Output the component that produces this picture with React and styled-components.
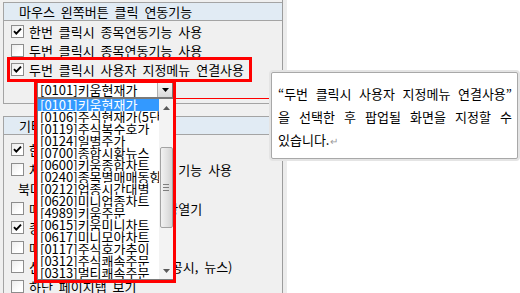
import React from "react";
import styled, { createGlobalStyle } from "styled-components";

const GlobalStyle = createGlobalStyle`
  html, body { margin: 0; padding: 0; background: #ffffff; }
  body {
    font-family: "Noto Sans CJK KR", "Noto Sans", sans-serif;
    font-size: 13px;
    color: #000;
  }
  * { box-sizing: border-box; }
`;

const Page = styled.div`
  position: relative;
  width: 520px;
  height: 293px;
  overflow: hidden;
  display: flex;
`;

const LeftPane = styled.div`
  width: 282px;
  height: 100%;
  background: #f0f0f0;
  padding: 2px 0 0 3px;
  display: flex;
  flex-direction: column;
  gap: 12px;
`;

const Divider = styled.div`
  width: 1px;
  background: #9c9c9c;
`;

const Gutter = styled.div`
  width: 4px;
  background: #ececec;
`;

const RightPane = styled.div`
  flex: 1;
  background: #ffffff;
`;

const Group = styled.div`
  position: relative;
  border: 1px solid #a4a4a4;
  border-right: none;
  ${(p) => (p.$open ? "border-bottom: none;" : "")}
  background: #f0f0f0;
  flex: ${(p) => (p.$grow ? 1 : "none")};
`;

const GroupHeader = styled.div`
  height: 18px;
  line-height: 18px;
  background: #e1ebf4;
  border-bottom: 1px solid #a4a4a4;
  padding-left: 15px;
  white-space: nowrap;
  word-spacing: 3px;
`;

const Rows = styled.div`
  display: flex;
  flex-direction: column;
  padding-top: ${(p) => p.$pt}px;
  padding-bottom: ${(p) => p.$pb || 0}px;
`;

const Row = styled.div`
  height: ${(p) => p.$h}px;
  display: flex;
  align-items: center;
  gap: 5px;
  padding-left: ${(p) => (p.$plain ? 14 : 7)}px;
  white-space: nowrap;
  word-spacing: 3px;
`;

const Box = styled.span`
  width: 13px;
  height: 13px;
  flex: none;
  border: 1px solid #8d8d8d;
  background: linear-gradient(135deg, #ececec 0%, #ffffff 70%);
  display: flex;
  align-items: center;
  justify-content: center;
`;

const Check = ({ on }) => (
  <Box>
    {on && (
      <svg width="11" height="11" viewBox="0 0 11 11">
        <path d="M2 5.2 L4.3 7.6 L9 2.6" fill="none" stroke="#000" strokeWidth="1.9" />
      </svg>
    )}
  </Box>
);

const CheckRow = ({ on, h, children }) => (
  <Row $h={h}>
    <Check on={on} />
    <span>{children}</span>
  </Row>
);

const ComboWrap = styled.div`
  position: relative;
  margin: 3px 0 0 33px;
  width: 136px;
  height: 16px;
  background: #fff;
  border: 1px solid #7a7a7a;
  display: flex;
  align-items: center;
  z-index: 3;
`;

const ComboText = styled.span`
  flex: 1;
  padding-left: 2px;
  line-height: 14px;
  white-space: nowrap;
  overflow: hidden;
`;

const ComboButton = styled.span`
  width: 15px;
  height: 14px;
  background: linear-gradient(#f6f6f6, #dadada);
  border-left: 1px solid #b0b0b0;
  display: flex;
  align-items: center;
  justify-content: center;
`;

const ListPanel = styled.div`
  position: absolute;
  left: -1px;
  top: 15px;
  width: 137px;
  height: 182px;
  background: #fff;
  border: 1px solid #7a7a7a;
  display: flex;
`;

const ListItems = styled.div`
  flex: 1;
  overflow: hidden;
`;

const ListItem = styled.div`
  height: 12px;
  line-height: 12px;
  padding-left: 2px;
  white-space: nowrap;
  overflow: hidden;
  background: ${(p) => (p.$sel ? "#3399ff" : "transparent")};
  color: ${(p) => (p.$sel ? "#fff" : "#000")};
`;

const ScrollBar = styled.div`
  width: 14px;
  background: #f3f3f3;
  display: flex;
  flex-direction: column;
  align-items: center;
`;

const ArrowSlot = styled.div`
  height: 17px;
  width: 100%;
  display: flex;
  align-items: center;
  justify-content: center;
`;

const Track = styled.div`
  flex: 1;
  width: 100%;
  padding-top: ${(p) => p.$offset}px;
  display: flex;
  flex-direction: column;
  align-items: center;
`;

const Thumb = styled.div`
  width: 13px;
  height: 81px;
  border: 1px solid #a3a3a3;
  border-radius: 2px;
  background: linear-gradient(90deg, #f2f2f2, #e0e0e0 60%, #d2d2d2);
  display: flex;
  flex-direction: column;
  align-items: center;
  justify-content: center;
  gap: 2px;
`;

const Grip = styled.span`
  width: 6px;
  height: 1px;
  background: #7e7e7e;
`;

const RedFrame = styled.div`
  position: absolute;
  left: ${(p) => p.$x}px;
  top: ${(p) => p.$y}px;
  width: ${(p) => p.$w}px;
  height: ${(p) => p.$h}px;
  border: 3px solid #ff0000;
  z-index: 5;
  pointer-events: none;
`;

const RedLine = styled.div`
  position: absolute;
  left: 176px;
  top: 98px;
  width: 95px;
  height: 1px;
  background: #ff0000;
  z-index: 5;
`;

const Callout = styled.div`
  position: absolute;
  left: 271px;
  top: 72px;
  width: 247px;
  height: 87px;
  background: #fff;
  border: 1px solid #a8a8a8;
  border-radius: 2px;
  box-shadow: 0 0 0 2px #e4e4e4;
  padding: 9px 5px 0 6px;
  z-index: 6;
`;

const CalloutLine = styled.div`
  height: 23px;
  line-height: 23px;
  white-space: nowrap;
  text-align: ${(p) => (p.$justify ? "justify" : "left")};
  text-align-last: ${(p) => (p.$justify ? "justify" : "left")};
`;

const ReturnMark = styled.span`
  color: #9a9a9a;
  font-size: 10px;
  margin-left: 1px;
`;

const items = [
  "[0101]키움현재가",
  "[0106]주식현재가(5단",
  "[0119]주식복수호가",
  "[0124]일별주가",
  "[0700]종합시황뉴스",
  "[0600]키움종합차트",
  "[0240]종목별매매동향",
  "[0212]업종시간대별",
  "[0620]미니업종차트",
  "[4989]키움주문",
  "[0615]키움미니차트",
  "[0617]미니모아차트",
  "[0117]주식호가추이",
  "[0312]주식쾌속주문",
  "[0313]멀티쾌속주문",
];

const Up = () => (
  <svg width="7" height="4" viewBox="0 0 7 4">
    <polygon points="0,4 7,4 3.5,0" fill="#5a5a5a" />
  </svg>
);
const Down = ({ color = "#5a5a5a" }) => (
  <svg width="7" height="4" viewBox="0 0 7 4">
    <polygon points="0,0 7,0 3.5,4" fill={color} />
  </svg>
);

export default function App() {
  return (
    <>
      <GlobalStyle />
      <Page>
        <LeftPane>
          <Group>
            <GroupHeader>마우스 왼쪽버튼 클릭 연동기능</GroupHeader>
            <Rows $pt={1} $pb={5}>
              <CheckRow on h={19}>한번 클릭시 종목연동기능 사용</CheckRow>
              <CheckRow h={19}>두번 클릭시 종목연동기능 사용</CheckRow>
              <CheckRow on h={19}>두번 클릭시 사용자 지정메뉴 연결사용</CheckRow>
              <ComboWrap>
                <ComboText>[0101]키움현재가</ComboText>
                <ComboButton>
                  <Down color="#000" />
                </ComboButton>
                <ListPanel>
                  <ListItems>
                    {items.map((t, i) => (
                      <ListItem key={t} $sel={i === 0}>{t}</ListItem>
                    ))}
                  </ListItems>
                  <ScrollBar>
                    <ArrowSlot><Up /></ArrowSlot>
                    <Track $offset={31}>
                      <Thumb>
                        <Grip />
                        <Grip />
                        <Grip />
                      </Thumb>
                    </Track>
                    <ArrowSlot><Down /></ArrowSlot>
                  </ScrollBar>
                </ListPanel>
              </ComboWrap>
            </Rows>
          </Group>
          <Group $grow $open>
            <GroupHeader>기타 설정</GroupHeader>
            <Rows $pt={5}>
              <CheckRow on h={19.5}>한글 종목명 표시</CheckRow>
              <CheckRow h={19.5}>차트 더블클릭시 종목연동 기능 사용</CheckRow>
              <Row $plain $h={19.5}>북다운 설정</Row>
              <CheckRow h={19.5}>메뉴 더블클릭시 화면 새창열기</CheckRow>
              <CheckRow on h={19.5}>종목 자동 선택</CheckRow>
              <CheckRow h={19.5}>메뉴 고정</CheckRow>
              <CheckRow h={19.5}>신규 메시지 알림창 표시(공시, 뉴스)</CheckRow>
              <CheckRow h={19.5}>하단 페이지탭 보기</CheckRow>
            </Rows>
          </Group>
        </LeftPane>
        <Divider />
        <Gutter />
        <RightPane />
        <RedFrame $x={7} $y={57} $w={245} $h={25} />
        <RedFrame $x={34} $y={80} $w={142} $h={203} />
        <RedLine />
        <Callout>
          <CalloutLine $justify>“두번 클릭시 사용자 지정메뉴 연결사용”</CalloutLine>
          <CalloutLine $justify>을 선택한 후 팝업될 화면을 지정할 수</CalloutLine>
          <CalloutLine>있습니다.<ReturnMark>↵</ReturnMark></CalloutLine>
        </Callout>
      </Page>
    </>
  );
}
